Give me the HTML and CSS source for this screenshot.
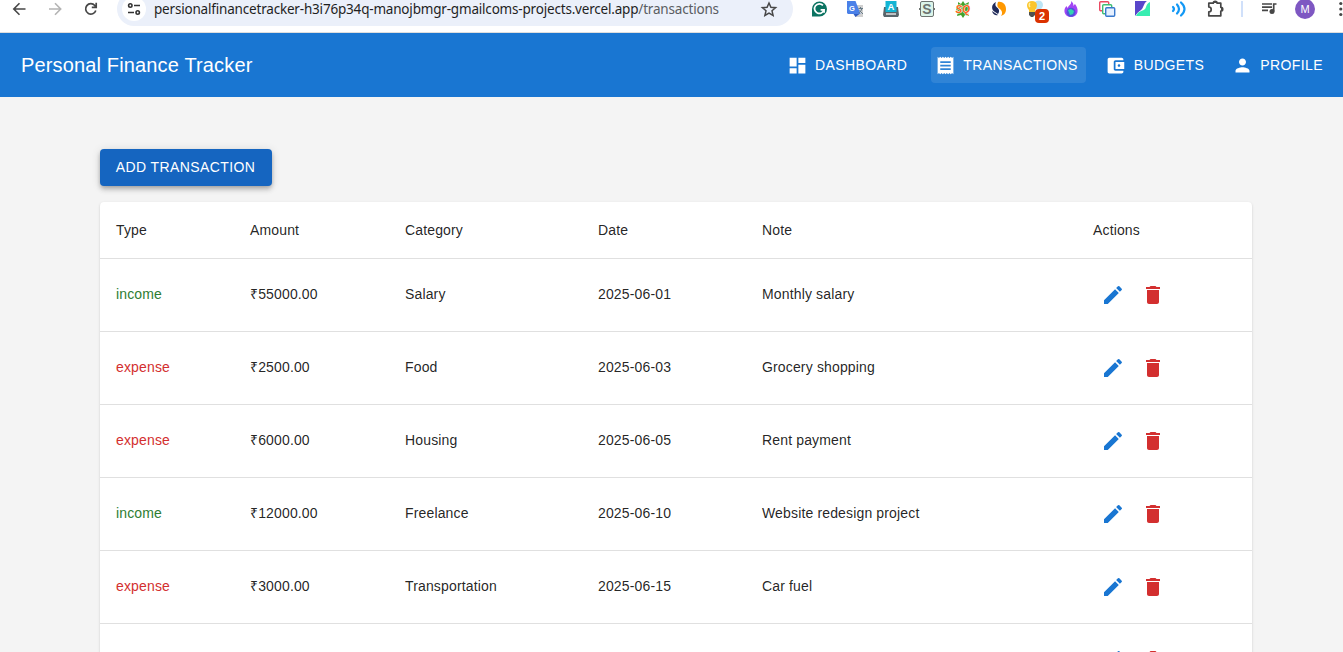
FILE: index.html
```html
<!DOCTYPE html>
<html lang="en">
<head>
<meta charset="utf-8">
<title>Personal Finance Tracker</title>
<link rel="stylesheet" href="styles.css">
</head>
<body>
<svg class="sprite" aria-hidden="true">
  <symbol id="edit" viewBox="0 0 24 24"><path d="M3 17.25V21h3.75L17.81 9.94l-3.75-3.75zM20.71 7.04c.39-.39.39-1.02 0-1.41l-2.34-2.34a.9959.9959 0 0 0-1.41 0l-1.83 1.83 3.75 3.75z"/></symbol>
  <symbol id="delete" viewBox="0 0 24 24"><path d="M6 19c0 1.1.9 2 2 2h8c1.1 0 2-.9 2-2V7H6zM19 4h-3.500l-1-1h-5l-1 1H5v2h14z"/></symbol>
</svg>
<div class="chrome">
  <div class="toolbar">
    <svg class="slot" viewBox="-18 -8 36 34" fill="none" stroke="#474747" stroke-width="1.600"><path d="M6.500 9H-5M.5 3.300L-5.200 9 .5 14.700"/></svg>
    <svg class="slot" viewBox="-18 -8 36 34" fill="none" stroke="#b4b4b4" stroke-width="1.600"><path d="M-6 9H5M0 3.300L5.700 9 0 14.700"/></svg>
    <svg class="slot" viewBox="-18 -8 36 34" fill="none" stroke="#474747" stroke-width="1.700"><path d="M4.800 10.500A5.200 5.200 0 1 1 3.800 5.500L5 7M5.200 2.800V7.300H.8"/></svg>
    <div class="omnibox">
      <span class="site"><svg width="24" height="24" viewBox="-12 -3 24 24" fill="none" stroke="#333" stroke-width="1.600"><circle cx="-3.700" cy="5.500" r="1.700"/><path d="M0 5.500h6M-6 12.500h6"/><circle cx="3.700" cy="12.500" r="1.700"/></svg></span>
      <span class="url">persionalfinancetracker-h3i76p34q-manojbmgr-gmailcoms-projects.vercel.app<span class="path">/transactions</span></span>
      <svg class="star" viewBox="-12 -8 24 34" fill="none" stroke="#474747" stroke-width="1.500"><path d="M0 3l1.900 4.300 4.700.4L3 10.800l1.100 4.600L0 13l-4.100 2.400L-3 10.800l-3.600-3.100 4.700-.4z"/></svg>
    </div>
    <svg class="slot" viewBox="-18 -8 36 34"><path d="M-7 16V9A7.500 7.500 0 1 1 .5 16.500H-7z" fill="#0b7361"/><path d="M3.900 5.400A4.800 4.800 0 1 0 5 9.800H1.600M5.100 9.500v3.300" fill="none" stroke="#fff" stroke-width="1.700"/></svg>
    <svg class="slot" viewBox="-18 -8 36 34"><path d="M-1 5h9v12H0z" fill="#d0d0d0"/><path d="M-8 1h8.500l5 13H-7l-1-1z" fill="#4a80e8"/><path d="M-1.500 14h6l-4 3z" fill="#315dc0"/><text x="-6" y="10.500" class="glyph" font-size="7.500" fill="#fff">G</text><path d="M3.500 8.500H8M5.500 7v1.500M7 8.500Q6 12 3.500 13M4.500 10.500L8 14" fill="none" stroke="#667a86"/></svg>
    <svg class="slot" viewBox="-18 -8 36 34"><path d="M-7 7H7l1 8-1 2H-7l-1-2z" fill="#59656b"/><path d="M-5 14H5" stroke="#fff" stroke-width="1.200"/><path d="M-5.500 1h11v11h-11z" fill="#13b5d4"/><text x="-3.500" y="10" class="glyph" font-size="9.500" fill="#fff">A</text></svg>
    <svg class="slot" viewBox="-18 -8 36 34"><rect x="-6.500" y="1.500" width="13" height="15" rx="1.500" fill="#dcf4e9" stroke="#6e7471"/><path d="M-7.500 8v2M7.500 8v2" stroke="#6e7471"/><text x="-4.700" y="14" class="glyph" font-size="14" fill="#6e7471">S</text></svg>
    <svg class="slot" viewBox="-18 -8 36 34"><path d="M-5 2l3 2 2-3 2 3 4-2-1 4 2 3-2 3 1 4-4-1-2 3-2-3-4 1 1-4-2-3 2-3z" fill="#43a22b"/><text x="-7.500" y="13" class="glyph slanted" font-size="11" textLength="14.500" lengthAdjust="spacingAndGlyphs" fill="#ff6417" stroke="#fff" stroke-width="1" paint-order="stroke">SQ</text></svg>
    <svg class="slot" viewBox="-18 -8 36 34"><path d="M-3 2C-8 4-8 10-4 12l3 2c2-3 1-5-1-6.500C-4 6-4 4-3 2zM-7 11c1 4 4 5 6 4z" fill="#202a59"/><path d="M-1 2c4-1 8 2 8 7 0 4-2 6-5 7 2-3 1-5-1-7-3-2-3-4-2-7z" fill="#ff9800"/></svg>
    <svg class="slot" viewBox="-18 -8 36 34"><circle cx="3.500" cy="5" r="4.500" fill="#bce5f5"/><path d="M-3 1c-6 0-6 6-3 9v2h6v-2C3 7 3 1-3 1z" fill="#fbc52c"/><path d="M-5 3c-1 1-1 3 0 4" stroke="#fff0a4" stroke-width="1.500" fill="none"/><path d="M-6 12h6v3l-2 2h-2l-2-2z" fill="#4f5052"/><rect x="0" y="9" width="14" height="14" rx="4" fill="#db3100"/><text x="4" y="19.800" class="glyph" font-size="11" fill="#fff">2</text></svg>
    <svg class="slot" viewBox="-18 -8 36 34"><path d="M0 1c2 2 3 3 2 5l2-2c2 3 3 5 2.500 8C6 15 3 17 0 17s-6-2-6.500-5c-.5-3 1-5 2-6l1 2C-2 5 1 4 0 1z" fill="#a145f5"/><circle cy="12.300" r="4.500" fill="#4e54dc"/><path d="M-3 10l3-1 3 2-1 3-3 1z" fill="#34d2b1"/></svg>
    <svg class="slot" viewBox="-18 -8 36 34" stroke-width="1.400"><rect x="-7.300" y="1.700" width="9" height="9" rx="1" fill="#fff" stroke="#eb4962"/><rect x="-4.300" y="4.700" width="9" height="9" rx="1" fill="#fff" stroke="#3fbd73"/><rect x="-1.300" y="7.700" width="9" height="8.600" rx="1" fill="#e6f0ff" stroke="#3979cd"/></svg>
    <svg class="slot" viewBox="-18 -8 36 34"><path d="M-8 1H4C1 3 1 6-1 9c-2 2-4 3-7 7z" fill="#5946ca"/><path d="M7 2v14H-7C-4 9 2 12 3 7c1-3 2-4 4-5z" fill="#38edb1"/></svg>
    <svg class="slot" viewBox="-18 -8 36 34" fill="none" stroke="#1298f5" stroke-width="2.200" stroke-linecap="round"><path d="M-6 7q2 2 0 4M-2 4.500q4 4.500 0 9M2 2.500q7 6.500 0 13"/></svg>
    <svg class="slot" viewBox="-18 -8 36 34"><path d="M-6.200 3.200h4.500a1.900 1.900 0 0 1 3.800 0H5.800V7.300a1.900 1.900 0 0 1 0 3.800v4.700H-6.200v-4a2.400 2.400 0 0 0 0-4.800z" fill="none" stroke="#474747" stroke-width="1.700" stroke-linejoin="round"/><path d="M-2 3a1.900 1.900 0 0 1 4 0M6 7.200a1.900 1.900 0 0 1 0 3.800" fill="#474747"/></svg>
    <span class="divider"></span>
    <svg class="slot" viewBox="-18 -8 36 34"><path d="M-7 4H3M-7 7.200H3M-7 10.400h6M7.500 4H4.700v7.500" fill="none" stroke="#474747" stroke-width="1.700"/><circle cx="3" cy="11.500" r="2.500" fill="#474747"/></svg>
    <span class="slot"><span class="avatar">M</span></span>
    <svg class="slot" viewBox="-18 -8 36 34" fill="#474747"><circle cx="-.2" cy="3.500" r="1.600"/><circle cx="-.2" cy="9" r="1.600"/><circle cx="-.2" cy="14.500" r="1.600"/></svg>
  </div>
</div>
<header class="appbar">
  <h1 class="brand">Personal Finance Tracker</h1>
  <nav class="nav">
    <a class="nav-item dashboard"><svg viewBox="0 0 24 24"><path d="M3 13h8V3H3zm0 8h8v-6H3zm10 0h8V11h-8zm0-18v6h8V3z"/></svg>DASHBOARD</a>
    <a class="nav-item transactions active"><svg viewBox="0 0 24 24"><path d="M18 17H6v-2h12zm0-4H6v-2h12zm0-4H6V7h12zM3 22l1.500-1.500L6 22l1.500-1.500L9 22l1.500-1.500L12 22l1.500-1.500L15 22l1.500-1.500L18 22l1.500-1.500L21 22V2l-1.500 1.500L18 2l-1.500 1.500L15 2l-1.500 1.500L12 2l-1.500 1.500L9 2 7.500 3.500 6 2 4.500 3.500 3 2z"/></svg>TRANSACTIONS</a>
    <a class="nav-item budgets"><svg viewBox="0 0 24 24"><path d="M21 18v1c0 1.100-.9 2-2 2H5c-1.110 0-2-.9-2-2V5c0-1.100.89-2 2-2h14c1.100 0 2 .9 2 2v1h-9c-1.110 0-2 .9-2 2v8c0 1.100.89 2 2 2zm-9-2h10V8H12zm4-2.500c-.83 0-1.500-.67-1.500-1.500s.67-1.500 1.500-1.500 1.500.67 1.500 1.500-.67 1.500-1.500 1.500"/></svg>BUDGETS</a>
    <a class="nav-item profile"><svg viewBox="0 0 24 24"><path d="M12 12c2.210 0 4-1.790 4-4s-1.790-4-4-4-4 1.790-4 4 1.790 4 4 4m0 2c-2.670 0-8 1.340-8 4v2h16v-2c0-2.660-5.330-4-8-4"/></svg>PROFILE</a>
  </nav>
</header>
<main class="content">
  <button class="add">ADD TRANSACTION</button>
  <div class="paper">
    <table class="table">
      <colgroup><col class="c-type"><col class="c-amount"><col class="c-category"><col class="c-date"><col class="c-note"><col></colgroup>
      <thead><tr><th>Type</th><th>Amount</th><th>Category</th><th>Date</th><th>Note</th><th>Actions</th></tr></thead>
      <tbody>
        <tr><td class="income">income</td><td>₹55000.00</td><td>Salary</td><td>2025-06-01</td><td>Monthly salary</td><td><div class="actions"><svg class="edit"><use href="#edit"/></svg><svg class="delete"><use href="#delete"/></svg></div></td></tr>
        <tr><td class="expense">expense</td><td>₹2500.00</td><td>Food</td><td>2025-06-03</td><td>Grocery shopping</td><td><div class="actions"><svg class="edit"><use href="#edit"/></svg><svg class="delete"><use href="#delete"/></svg></div></td></tr>
        <tr><td class="expense">expense</td><td>₹6000.00</td><td>Housing</td><td>2025-06-05</td><td>Rent payment</td><td><div class="actions"><svg class="edit"><use href="#edit"/></svg><svg class="delete"><use href="#delete"/></svg></div></td></tr>
        <tr><td class="income">income</td><td>₹12000.00</td><td>Freelance</td><td>2025-06-10</td><td>Website redesign project</td><td><div class="actions"><svg class="edit"><use href="#edit"/></svg><svg class="delete"><use href="#delete"/></svg></div></td></tr>
        <tr><td class="expense">expense</td><td>₹3000.00</td><td>Transportation</td><td>2025-06-15</td><td>Car fuel</td><td><div class="actions"><svg class="edit"><use href="#edit"/></svg><svg class="delete"><use href="#delete"/></svg></div></td></tr>
        <tr><td></td><td></td><td></td><td></td><td></td><td><div class="actions"><svg class="edit"><use href="#edit"/></svg><svg class="delete"><use href="#delete"/></svg></div></td></tr>
      </tbody>
    </table>
  </div>
</main>
</body>
</html>
```
FILE: styles.css
```css
* { box-sizing: border-box; }
body {
  display: flex;
  flex-direction: column;
  margin: 0;
  height: 652px;
  overflow: hidden;
  background: #f4f4f4;
  color: rgba(0, 0, 0, 0.87);
  font-family: "Liberation Sans", Arial, sans-serif;
}
.sprite { display: none; }

/* Browser toolbar */
.chrome { flex: none; height: 33px; overflow: hidden; background: #fff; border-bottom: 1px solid #dedede; }
.toolbar { display: flex; height: 34px; margin-top: -8px; padding-left: 1px; }
.slot { flex: 0 0 36px; width: 36px; height: 34px; display: flex; align-items: center; justify-content: center; }
.glyph { font-family: "Liberation Sans", Arial, sans-serif; font-weight: 700; }
.slanted { font-style: italic; }
.omnibox {
  flex: 0 0 676px;
  display: flex;
  align-items: center;
  margin: 0 8px;
  padding: 0 12px 0 5px;
  border-radius: 17px;
  background: #ebf0fa;
}
.site { display: flex; width: 24px; height: 24px; border-radius: 50%; background: #fff; }
.url {
  flex: 1;
  margin-left: 8px;
  font-family: "Noto Sans", "Open Sans", sans-serif;
  font-size: 13.5px;
  line-height: 20px;
  letter-spacing: -0.19px;
  white-space: nowrap;
  color: #1f1f1f;
}
.path { color: #5a5d61; }
.star { width: 24px; height: 34px; }
.divider { flex: 0 0 2px; height: 16px; margin: 9px 8px; background: #d0e0fa; }
.avatar {
  width: 20px;
  height: 20px;
  border-radius: 50%;
  background: #7e57c2;
  color: #fff;
  font-size: 11px;
  line-height: 20px;
  text-align: center;
}

/* Application bar */
.appbar {
  flex: none;
  display: flex;
  align-items: center;
  justify-content: space-between;
  height: 64px;
  padding: 0 12px 0 21px;
  background: #1976d2;
  color: #fff;
}
.brand { margin: 0; font-size: 20px; font-weight: 400; line-height: 32px; letter-spacing: 0.15px; }
.nav { display: flex; gap: 16px; }
.nav-item {
  display: flex;
  align-items: center;
  height: 36px;
  padding: 0 8px 0 3.5px;
  border-radius: 4px;
  font-size: 14px;
  letter-spacing: 0.4px;
}
.nav-item svg { width: 21px; height: 21px; margin-right: 7.5px; fill: #fff; }
.active { background: rgba(255, 255, 255, 0.1); }

/* Transactions */
.content { flex: 1; min-height: 0; overflow: hidden; padding: 52px 91px 0 100px; }
.add {
  display: block;
  width: 172px;
  height: 37px;
  padding: 0 1px 2px 0;
  border: 0;
  border-radius: 4px;
  background: #1565c0;
  color: #fff;
  font: 14px/24px "Liberation Sans", Arial, sans-serif;
  letter-spacing: 0.4px;
  box-shadow: 0 2px 4px -1px rgba(0, 0, 0, 0.2), 0 4px 5px rgba(0, 0, 0, 0.14), 0 1px 10px rgba(0, 0, 0, 0.12);
}
.paper {
  margin-top: 16px;
  border-radius: 4px;
  background: #fff;
  box-shadow: 0 2px 1px -1px rgba(0, 0, 0, 0.2), 0 1px 1px rgba(0, 0, 0, 0.14), 0 1px 3px rgba(0, 0, 0, 0.12);
}
.table { width: 100%; table-layout: fixed; border-collapse: separate; border-spacing: 0; }
.c-type { width: 134px; }
.c-amount { width: 155px; }
.c-category { width: 193px; }
.c-date { width: 164px; }
.c-note { width: 331px; }
th, td {
  padding: 0 16px;
  border-bottom: 1px solid #e0e0e0;
  text-align: left;
  font-size: 14px;
  font-weight: 400;
  line-height: 20px;
  letter-spacing: 0.15px;
}
th { height: 57px; }
td { height: 73px; padding-bottom: 2px; }
.income { color: #2e7d32; }
.expense { color: #d32f2f; }
.actions { display: flex; gap: 16px; padding-left: 8px; margin-top: 1px; }
.actions svg { width: 24px; height: 24px; }
.edit { fill: #1976d2; }
.delete { fill: #d32f2f; }
```
